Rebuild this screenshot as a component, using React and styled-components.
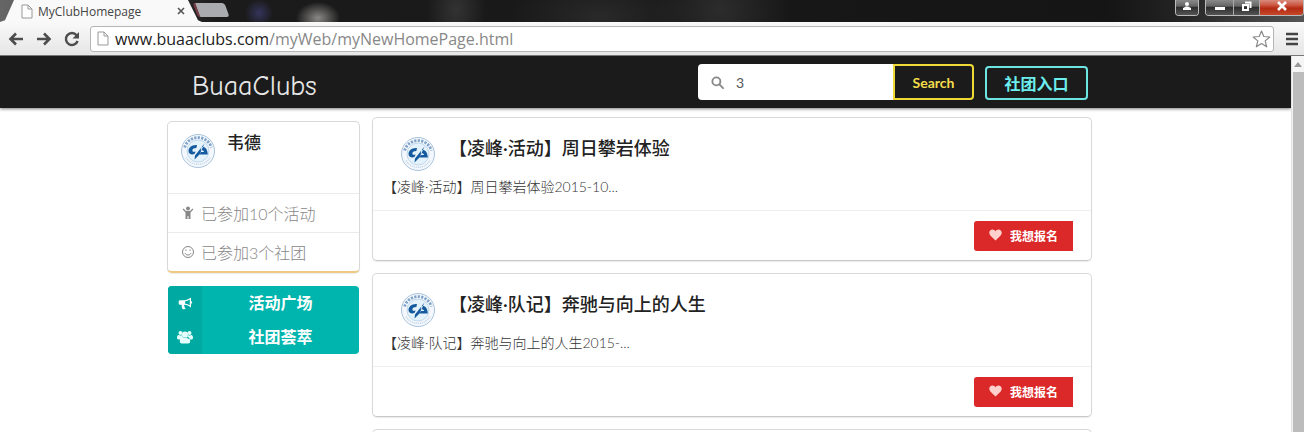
import React from "react";
import styled, { createGlobalStyle } from "styled-components";

const Global = createGlobalStyle`
  * { box-sizing: border-box; }
  body { margin: 0; background: #fff; overflow: hidden; }
  button, input { font-family: inherit; }
  h1, h2, p, ul { margin: 0; padding: 0; }
`;

const uiFont = `Lato, "Noto Sans CJK SC", sans-serif`;
const chromeFont = `"Open Sans", "Noto Sans", sans-serif`;

const Window = styled.div`
  height: 100vh;
  display: flex;
  flex-direction: column;
  overflow: hidden;
  font-family: ${uiFont};
  font-size: 14px;
  color: #222;
`;

/* ---------- browser frame ---------- */

const TabStrip = styled.div`
  height: 22px;
  flex: none;
  display: flex;
  align-items: flex-start;
  justify-content: space-between;
  background:
    radial-gradient(ellipse 14px 14px at 259px 13px, #34345c, transparent),
    radial-gradient(ellipse 22px 16px at 318px 18px, #8a8886, transparent),
    radial-gradient(ellipse 30px 40px at 456px 10px, #333, transparent),
    radial-gradient(ellipse 90px 40px at 600px 16px, #292929, transparent),
    radial-gradient(ellipse 70px 60px at 720px 10px, #2c2c2c, transparent),
    linear-gradient(90deg, #666 0, #1b1b1b 220px, #151515 85%, #222 90%, #555 100%);
`;

const TabGroup = styled.div`
  display: flex;
  height: 22px;
`;

const Tab = styled.div`
  width: 202px;
  height: 22px;
  display: flex;
  align-items: center;
  gap: 5px;
  padding: 0 17px 0 21px;
  clip-path: polygon(0 100%, 5px 92%, 14px 0, 188px 0, 198px 92%, 100% 100%);
  background: #f9f9f9;
  font: 12px ${chromeFont};
  color: #444;
`;

const TabTitle = styled.span`
  flex: 1;
`;

const TabClose = styled.button`
  display: flex;
  padding: 0;
  border: 0;
  background: none;
`;

const NewTab = styled.button`
  width: 32px;
  height: 14px;
  margin: 3px 0 0 -7px;
  padding: 0;
  border: 0;
  border-left: 3px solid #713a44;
  background: #a9abae;
  border-radius: 3px;
  transform: skewX(20deg);
`;

const Controls = styled.div`
  display: flex;
  gap: 6px;
`;

const ControlGroup = styled.div`
  display: flex;
  height: 16px;
  border: 1px solid #bbb;
  border-top: 0;
  border-radius: 0 0 4px 4px;
  overflow: hidden;
`;

const ControlButton = styled.button`
  width: ${(p) => p.$width}px;
  padding: 0 0 3px;
  border: 0;
  border-left: ${(p) => (p.$divided ? "1px solid #aaa" : "0")};
  display: flex;
  align-items: center;
  justify-content: center;
  background: ${(p) =>
    p.$close
      ? "linear-gradient(#d98b7c 0, #cc5540 35%, #b32a12 55%, #c8482b 100%)"
      : "linear-gradient(#8a8a8a 0, #666 40%, #2e2e2e 50%, #555 100%)"};
`;

const Toolbar = styled.div`
  height: 34px;
  flex: none;
  display: flex;
  align-items: center;
  gap: 8px;
  padding: 0 2px 0 6px;
  background: linear-gradient(#f9f9f9, #e6e6e6);
  border-bottom: 1px solid #777;
`;

const NavButton = styled.button`
  width: 20px;
  height: 20px;
  flex: none;
  padding: 0;
  border: 0;
  background: none;
  display: flex;
  align-items: center;
  justify-content: center;
`;

const Omnibox = styled.div`
  flex: 1;
  height: 26px;
  display: flex;
  align-items: center;
  gap: 6px;
  padding: 0 2px 0 6px;
  border: 1px solid #b5b5b5;
  border-radius: 3px;
  background: #fff;
  font: 16px ${chromeFont};
`;

const Url = styled.div`
  flex: 1;
  color: #888;
  white-space: nowrap;
`;

const Host = styled.span`
  color: #222;
`;

const Viewport = styled.div`
  flex: 1;
  min-height: 0;
  display: flex;
`;

const Page = styled.div`
  flex: 1;
  min-width: 0;
  overflow: hidden;
`;

const ScrollTrack = styled.div`
  width: 13px;
  flex: none;
  display: flex;
  flex-direction: column;
  background: #f1f1f1;
  border-left: 1px solid #e2e2e2;
`;

const ScrollArrow = styled.button`
  height: 16px;
  padding: 0;
  border: 0;
  background: #f5f5f5;
  display: flex;
  align-items: center;
  justify-content: center;
`;

const ScrollThumb = styled.div`
  flex: 1;
  margin-left: 1px;
  background: #bcbcbc;
`;

/* ---------- site ---------- */

const SiteHeader = styled.header`
  background: #1b1b1b;
  padding-right: 32px;
  box-shadow: 0 1px 3px rgba(0, 0, 0, 0.5);
`;

const HeaderInner = styled.div`
  max-width: 925px;
  height: 52px;
  margin: 0 auto;
  padding: 0 4px 0 25px;
  display: flex;
  align-items: center;
`;

const Brand = styled.a`
  flex: 1;
  padding-top: 8px;
  font: 28px/32px "Comic Sans MS", "Comic Neue", "Open Sans", sans-serif;
  color: #e6e6e6;
  text-decoration: none;
`;

const SearchForm = styled.form`
  display: flex;
  height: 36px;
  margin-right: 11px;
`;

const SearchField = styled.label`
  width: 195px;
  display: flex;
  align-items: center;
  gap: 12px;
  padding: 0 13px;
  background: #fff;
  border-radius: 4px 0 0 4px;
`;

const SearchInput = styled.input`
  flex: 1;
  min-width: 0;
  padding: 0;
  border: 0;
  outline: 0;
  background: none;
  font-size: 14px;
  color: #555;
`;

const SearchButton = styled.button`
  width: 81px;
  border: 2px solid #efd936;
  border-radius: 0 4px 4px 0;
  background: #1b1b1b;
  color: #f5dd4c;
  font-size: 14px;
  font-weight: 700;
`;

const EntryButton = styled.button`
  width: 103px;
  height: 34px;
  margin-top: 2px;
  padding: 0;
  border: 2px solid #6de5e3;
  border-radius: 4px;
  background: #1b1b1b;
  color: #6deeee;
  font-size: 16px;
  font-weight: 700;
`;

const Main = styled.main`
  padding-right: 32px;
`;

const Columns = styled.div`
  max-width: 925px;
  margin: 0 auto;
  padding-top: 9px;
  display: grid;
  grid-template-columns: 193px minmax(0, 1fr);
  gap: 12px;
  align-items: start;
`;

const Sidebar = styled.aside`
  padding-top: 4px;
  display: flex;
  flex-direction: column;
  gap: 13px;
`;

const Panel = styled.section`
  border: 1px solid #d9d9d9;
  border-bottom: ${(p) => (p.$accent ? "2px solid #efc982" : "1px solid #c8c8c8")};
  border-radius: 5px;
  background: #fff;
  box-shadow: 0 1px 1px rgba(0, 0, 0, 0.08);
`;

const Profile = styled.div`
  height: 71px;
  display: flex;
  align-items: flex-start;
  gap: 11px;
  padding: 11px 12px;
`;

const ProfileName = styled.h2`
  font-size: 17px;
  line-height: 20px;
  font-weight: 500;
`;

const Stat = styled.div`
  height: 39px;
  display: flex;
  align-items: center;
  gap: 6px;
  padding: 0 13px;
  border-top: 1px solid #ebebeb;
  font-size: 16px;
  font-weight: 300;
  color: #888;
`;

const SideMenu = styled.nav`
  margin: 0 1px;
  border-radius: 4px;
  overflow: hidden;
  background: #00b5ad;
`;

const MenuLink = styled.a`
  height: 34px;
  display: flex;
  align-items: stretch;
  color: #fff;
  font-size: 16px;
  line-height: 34px;
  font-weight: 700;
  text-align: center;
  text-decoration: none;
`;

const MenuIcon = styled.span`
  width: 34px;
  display: flex;
  align-items: center;
  justify-content: center;
  background: #00aaa2;
`;

const MenuText = styled.span`
  flex: 1;
`;

const Feed = styled.div`
  display: flex;
  flex-direction: column;
  gap: 12px;
`;

const PostBody = styled.div`
  height: 92px;
  padding: 18px 10px 0;
`;

const PostHead = styled.div`
  display: flex;
  align-items: flex-start;
  gap: 13px;
  padding-left: 17px;
`;

const PostTitle = styled.h2`
  font-size: 18px;
  line-height: 24px;
  font-weight: 500;
`;

const PostText = styled.p`
  margin-top: 4px;
  font-size: 14px;
  line-height: 22px;
  font-weight: 300;
  color: #333;
`;

const PostFoot = styled.div`
  display: flex;
  justify-content: flex-end;
  padding: 10px 18px 9px;
  border-top: 1px solid #eee;
`;

const JoinButton = styled.button`
  width: 99px;
  height: 30px;
  display: flex;
  align-items: center;
  justify-content: center;
  gap: 8px;
  padding: 0 0 2px;
  border: 0;
  border-radius: 3px 0 0 3px;
  background: #db2828;
  color: #fff;
  font-size: 12px;
  font-weight: 700;
`;

/* ---------- drawings ---------- */

const FileIcon = () => (
  <svg width="12" height="15" viewBox="0 0 12 15" fill="#fff" stroke="#999">
    <path d="M1 1h6l4 4v9H1zM7 1v4h4" />
  </svg>
);

const Arrow = ({ flip }) => (
  <svg width="16" height="14" viewBox="0 0 16 14" fill="none" stroke="#4d4d4d" strokeWidth="2.6">
    <path d={flip ? "M1 7h12M8 1.5 13.5 7 8 12.500" : "M15 7H3M8 1.500 2.500 7 8 12.500"} />
  </svg>
);

const Reload = () => (
  <svg width="16" height="16" viewBox="0 0 16 16">
    <path d="M12.600 4.200A6 6 0 1 0 13.600 10" fill="none" stroke="#4d4d4d" strokeWidth="2.400" />
    <path d="M15 1v6.500H8.500z" fill="#4d4d4d" />
  </svg>
);

const Star = () => (
  <svg width="19" height="18" viewBox="0 0 19 18" fill="#fff" stroke="#888" strokeWidth="1.200" strokeLinejoin="round">
    <path d="m9.500 1 2.300 5.500 6 .5-4.600 3.900 1.500 5.900-5.200-3.200-5.200 3.200 1.500-5.900L1.200 7l6-.5z" />
  </svg>
);

const Emblem = () => (
  <svg width="36" height="36" viewBox="0 0 36 36" role="img" aria-label="北航校徽">
    <circle cx="18" cy="18" r="16.500" fill="#f4f8fc" stroke="#a9c3de" />
    <path d="M4.600 14.500A14 14 0 0 1 31.400 14.500" fill="none" stroke="#7fa3c9" strokeWidth="2.800" strokeDasharray="2.200 1.300" />
    <path d="M6 24.500a14 14 0 0 0 24 0" fill="none" stroke="#c6d8ea" strokeWidth="1.500" strokeDasharray="1.200 .8" />
    <circle cx="18" cy="18" r="11" fill="#e4f2fb" stroke="#b5cee5" strokeWidth=".8" />
    <path d="M17 12c-5-.5-8.500 2.500-8.500 6 0 3 3 4 6 3l1.200-2.600c-2 .8-3.500.4-3.300-1.200.2-1.600 2-2.400 4-2.300zM24.500 10.500l-9.500 12-.5 4 5-5zM21.500 14c4-.5 6 2 6.300 7.500h-8.500l1.800-2.500h3c-.3-1.500-1.600-2-3.500-1.700z" fill="#155a9e" />
  </svg>
);

const Person = () => (
  <svg width="14" height="14" viewBox="0 0 14 14" fill="#888">
    <circle cx="7" cy="2.500" r="2" />
    <path d="M2.500 2.500 5 5h4l2.500-2.500.9.900L9.500 6.500V13h-2v-3h-1v3h-2V6.500L1.600 3.400z" />
  </svg>
);

const Smile = () => (
  <svg width="14" height="14" viewBox="0 0 14 14" fill="none" stroke="#888">
    <circle cx="7" cy="7" r="5.500" />
    <path d="M4 8.200c1 2.400 5 2.400 6 0M5 4.500v1.400M9 4.500v1.400" />
  </svg>
);

const Bullhorn = () => (
  <svg width="15" height="13" viewBox="0 0 15 13" fill="#fff">
    <path fillRule="evenodd" d="M13 .5v3.700a1.200 1.200 0 0 1 0 2.400v3.900C11 9 9 8 6.500 7.800c-.8.600-.3 1.500.2 2-.4.700.2 1.200 1 1.800-.8.900-2.700.8-3.400.1-.4-1.300-.9-2.400-.5-4H2A1.300 1.300 0 0 1 .7 6.400V4.500C.7 3.800 1.300 3.200 2 3.200h4C8.800 3 11 1.800 13 .5zm-1.200 2C10.200 3.500 8.800 4 7.200 4.200v2.500c1.700.2 3.200.7 4.600 1.600z" />
  </svg>
);

const Users = () => (
  <svg width="16" height="14" viewBox="0 0 16 14" fill="#e6fffd">
    <circle cx="3.500" cy="3" r="2" />
    <circle cx="12.500" cy="3" r="2" />
    <circle cx="8" cy="4.500" r="3" />
    <path d="M0 8c0-2 .8-3.200 2-3 1.500.8 2.500.4 3 .3L6 8l-3 1.500C1 9.500 0 9 0 8zM16 8c0-2-.8-3.200-2-3-1.500.8-2.500.4-3 .3L10 8l3 1.500c2 0 3-.5 3-1.500zM2.800 11.500C2.800 9 4 7 5.500 7c1.700 1 3.300 1 5 0 1.500 0 2.700 2 2.700 4.500 0 1.300-.9 2-2 2H4.800c-1.100 0-2-.7-2-2z" />
  </svg>
);

const Heart = () => (
  <svg width="13" height="12" viewBox="0 0 13 12" fill="#ffd0cc">
    <path d="M6.500 11.500 1.300 6.400C-.9 3.700.7.500 3.500.5c1.400 0 2.300.8 3 1.700.7-.9 1.600-1.700 3-1.700 2.800 0 4.400 3.200 2.200 5.900z" />
  </svg>
);

const Magnifier = () => (
  <svg width="13" height="13" viewBox="0 0 14 14" fill="none" stroke="#888" strokeWidth="2">
    <circle cx="5.800" cy="5.800" r="4.300" />
    <path d="m9 9 4 4" strokeLinecap="round" />
  </svg>
);

const posts = [
  { title: "【凌峰·活动】周日攀岩体验", text: "【凌峰·活动】周日攀岩体验2015-10..." },
  { title: "【凌峰·队记】奔驰与向上的人生", text: "【凌峰·队记】奔驰与向上的人生2015-..." },
  { title: "", text: "" },
];

const Post = ({ title, text }) => (
  <Panel as="article">
    <PostBody>
      {title && (
        <>
          <PostHead>
            <Emblem />
            <PostTitle>{title}</PostTitle>
          </PostHead>
          <PostText>{text}</PostText>
        </>
      )}
    </PostBody>
    {title && (
      <PostFoot>
        <JoinButton type="button">
          <Heart />
          我想报名
        </JoinButton>
      </PostFoot>
    )}
  </Panel>
);

export default function App() {
  return (
    <Window>
      <Global />
      <TabStrip>
        <TabGroup>
          <Tab>
            <FileIcon />
            <TabTitle>MyClubHomepage</TabTitle>
            <TabClose type="button" aria-label="Close tab">
              <svg width="8" height="8" viewBox="0 0 8 8" stroke="#555" strokeWidth="1.600">
                <path d="m1 1 6 6M7 1 1 7" />
              </svg>
            </TabClose>
          </Tab>
          <NewTab type="button" aria-label="New tab" />
        </TabGroup>
        <Controls>
          <ControlGroup>
            <ControlButton type="button" $width={22} aria-label="User">
              <svg width="10" height="10" viewBox="0 0 10 10" fill="#fff">
                <circle cx="5" cy="3" r="2" />
                <path d="M1 9V7l3-1.500h2L9 7v2z" />
              </svg>
            </ControlButton>
          </ControlGroup>
          <ControlGroup>
            <ControlButton type="button" $width={27} aria-label="Minimize">
              <svg width="12" height="12" viewBox="0 0 12 12"><path d="M1 7h10v3H1z" fill="#fff" /></svg>
            </ControlButton>
            <ControlButton type="button" $width={26} $divided aria-label="Restore">
              <svg width="11" height="11" viewBox="0 0 11 11" fill="none" stroke="#fff" strokeWidth="2">
                <path d="M2 4h5v5H2zM4 1.500h5.500V7" />
              </svg>
            </ControlButton>
            <ControlButton type="button" $width={44} $divided $close aria-label="Close">
              <svg width="10" height="10" viewBox="0 0 10 10" stroke="#fff" strokeWidth="2.600">
                <path d="m1 1 8 8M9 1 1 9" />
              </svg>
            </ControlButton>
          </ControlGroup>
        </Controls>
      </TabStrip>
      <Toolbar>
        <NavButton type="button" aria-label="Back"><Arrow /></NavButton>
        <NavButton type="button" aria-label="Forward"><Arrow flip /></NavButton>
        <NavButton type="button" aria-label="Reload"><Reload /></NavButton>
        <Omnibox>
          <FileIcon />
          <Url><Host>www.buaaclubs.com</Host>/myWeb/myNewHomePage.html</Url>
          <Star />
        </Omnibox>
        <NavButton type="button" aria-label="Menu">
          <svg width="12" height="14" viewBox="0 0 12 14" stroke="#444" strokeWidth="2.600">
            <path d="M0 2h12M0 7h12M0 12h12" />
          </svg>
        </NavButton>
      </Toolbar>
      <Viewport>
        <Page>
          <SiteHeader>
            <HeaderInner>
              <Brand href="#">BuaaClubs</Brand>
              <SearchForm onSubmit={(e) => e.preventDefault()}>
                <SearchField>
                  <Magnifier />
                  <SearchInput aria-label="Search" defaultValue="3" />
                </SearchField>
                <SearchButton type="submit">Search</SearchButton>
              </SearchForm>
              <EntryButton type="button">社团入口</EntryButton>
            </HeaderInner>
          </SiteHeader>
          <Main>
            <Columns>
              <Sidebar>
                <Panel $accent>
                  <Profile>
                    <Emblem />
                    <ProfileName>韦德</ProfileName>
                  </Profile>
                  <Stat><Person />已参加10个活动</Stat>
                  <Stat><Smile />已参加3个社团</Stat>
                </Panel>
                <SideMenu>
                  <MenuLink href="#"><MenuIcon><Bullhorn /></MenuIcon><MenuText>活动广场</MenuText></MenuLink>
                  <MenuLink href="#"><MenuIcon><Users /></MenuIcon><MenuText>社团荟萃</MenuText></MenuLink>
                </SideMenu>
              </Sidebar>
              <Feed>
                {posts.map((post, i) => (
                  <Post key={i} {...post} />
                ))}
              </Feed>
            </Columns>
          </Main>
        </Page>
        <ScrollTrack>
          <ScrollArrow type="button" aria-label="Scroll up">
            <svg width="8" height="5" viewBox="0 0 8 5"><path d="M4 0l4 5H0z" fill="#999" /></svg>
          </ScrollArrow>
          <ScrollThumb />
        </ScrollTrack>
      </Viewport>
    </Window>
  );
}
